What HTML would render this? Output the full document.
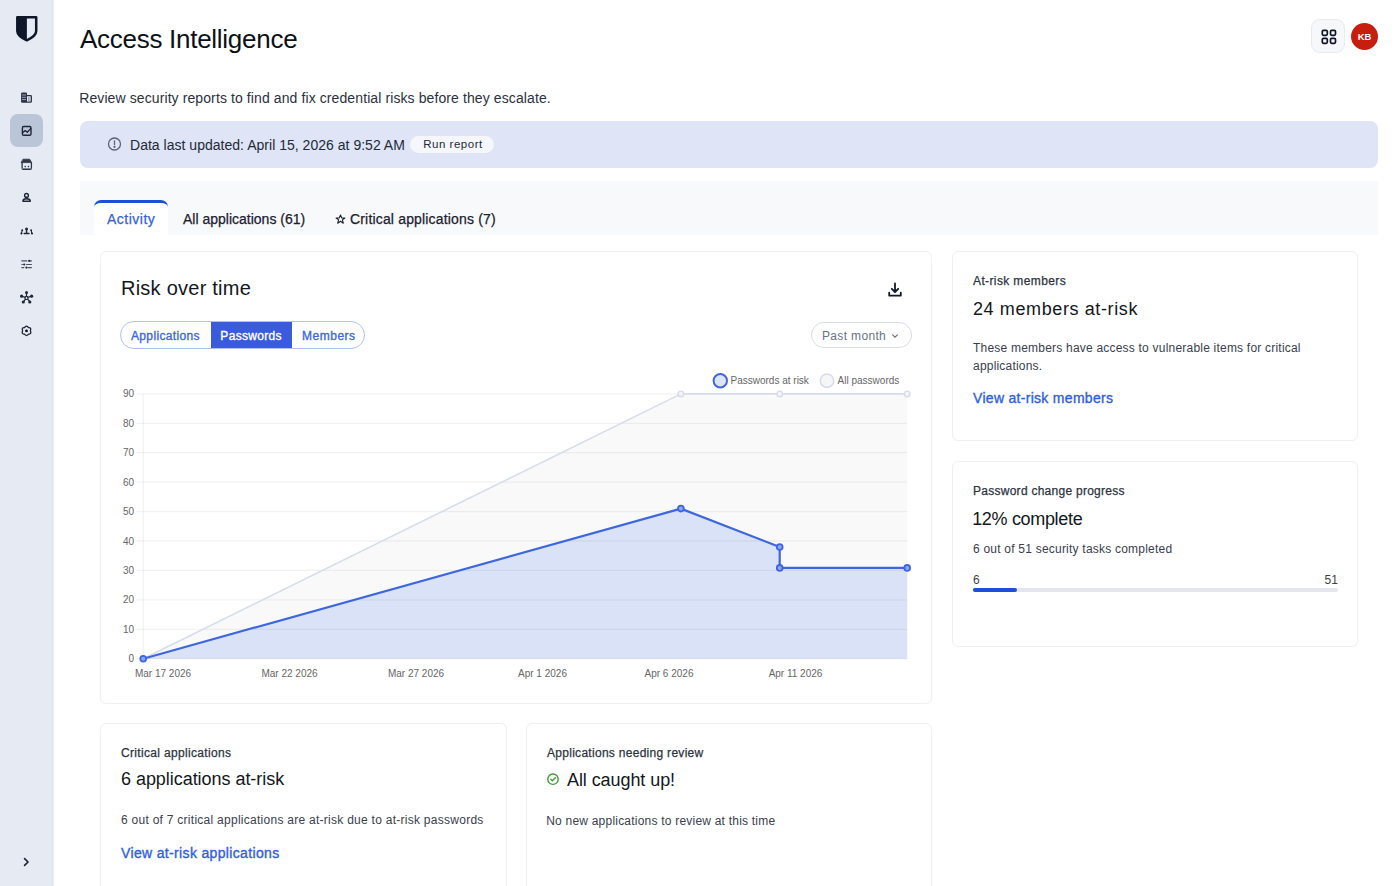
<!DOCTYPE html>
<html><head><meta charset="utf-8">
<style>
*{box-sizing:border-box;margin:0;padding:0}
html,body{width:1400px;height:886px;overflow:hidden;background:#fff;font-family:"Liberation Sans",sans-serif;color:#1b2029}
.abs{position:absolute}
.t{position:absolute;white-space:nowrap;line-height:1}
#side{position:absolute;left:0;top:0;width:53px;height:886px;background:#e6ebf3;border-right:1px solid #e1e5ec;box-shadow:1px 0 1px rgba(225,229,240,0.6)}
.nav{position:absolute;left:10px;width:33px;height:33px;border-radius:8px}
.nav.on{background:#bac5d8}
#banner{position:absolute;left:80px;top:121px;width:1298px;height:46.7px;border-radius:8px;background:#dfe4f6}
#tabbar{position:absolute;left:80px;top:181px;width:1298px;height:54px;background:#f8f9fb}
.card{position:absolute;background:#fff;border:1px solid #eff0f4;border-radius:6px}
</style></head><body>
<div id="side">
  <svg class="abs" style="left:16px;top:16px" width="22" height="27" viewBox="0 0 22 27"><path d="M1.3 1.3H20.2V15C20.2 18.8 15.8 22 10.75 24.3C5.7 22 1.3 18.8 1.3 15Z" fill="none" stroke="#0e1729" stroke-width="2.5" stroke-linejoin="round"/><path d="M1 1H10.9V24.6C5.5 22 1 18.8 1 15Z" fill="#0e1729"/></svg>
  <div class="nav on" style="top:114px"></div>
  <svg class="abs" style="left:0;top:0" width="53" height="886" viewBox="0 0 53 886" fill="none" stroke="#1f2636" stroke-width="1.5" stroke-linecap="round" stroke-linejoin="round">
        <!-- building -->
    <rect x="21.1" y="92.5" width="5.9" height="10.2" rx="1.2" fill="#2a3142" stroke="none"/>
    <path d="M22.5 95H25.6M22.5 97.3H25.6M22.5 99.6H25.6" stroke="#aeb6c6" stroke-width="0.9"/>
    <path d="M26.8 95.6H30.6C31.1 95.6 31.3 95.9 31.3 96.3V101.4C31.3 101.9 31.1 102.1 30.6 102.1H26.8" stroke-width="1.3" stroke="#2a3142"/>
    <path d="M28.9 97.6V100.6" stroke="#6c7486" stroke-width="0.9"/>
    <!-- chart -->
    <rect x="22.4" y="126.5" width="8.6" height="8.8" rx="1.4" stroke-width="1.4"/>
    <path d="M22.8 132.6L25.2 130.6L27.3 132.2L30.6 128.6" stroke-width="1.3"/>
    <!-- vault/shop -->
    <path d="M23.3 159.2H29.7L31.6 162.6H21.4Z" fill="#2f3647" stroke="#2f3647" stroke-width="0.8"/>
    <path d="M22.1 162.5V168.3C22.1 168.9 22.5 169.3 23.1 169.3H30.4C31 169.3 31.4 168.9 31.4 168.3V162.5" stroke-width="1.3" stroke="#2f3647"/>
    <path d="M22.6 168.5H30.9" stroke="#7c8496" stroke-width="1"/>
    <circle cx="25.2" cy="166.6" r="0.8" fill="#2f3647" stroke="none"/>
    <circle cx="28.4" cy="166.6" r="0.8" fill="#2f3647" stroke="none"/>
    <!-- person -->
    <circle cx="26.5" cy="195.4" r="1.9" stroke-width="1.4"/>
    <path d="M26.5 197.5V198.6"  stroke-width="1.3"/>
    <path d="M22.9 201.3C22.9 199.7 24.4 198.7 26.5 198.7C28.6 198.7 30.3 199.7 30.3 201.3Z" stroke-width="1.4"/>
    <!-- group -->
    <circle cx="26.55" cy="229.1" r="1.5" fill="#1f2636" stroke="none"/>
    <circle cx="22.2" cy="230.3" r="1" fill="#1f2636" stroke="none"/>
    <circle cx="31.1" cy="230.3" r="1" fill="#1f2636" stroke="none"/>
    <path d="M26.55 230.8V232.4M24.2 233.4H29" stroke-width="1.5"/>
    <path d="M22 231.2L21.5 233.3M31.3 231.2L31.9 233.3" stroke-width="1.1"/>
    <circle cx="21.4" cy="233.6" r="1" fill="#0f1422" stroke="none"/>
    <circle cx="32" cy="233.6" r="1" fill="#0f1422" stroke="none"/>
    <!-- sliders -->
    <path d="M21.8 260.9H26.8M30.4 260.9H31.4M21.8 264.5H22.4M26.6 264.5H31.4M21.8 267.6H23.8M28 267.6H31.4" stroke-width="1.2" stroke="#4a5163"/>
    <circle cx="29.2" cy="260.9" r="1.1" fill="#1f2636" stroke="none"/>
    <circle cx="24.2" cy="264.5" r="1.1" fill="#1f2636" stroke="none"/>
    <circle cx="26.4" cy="267.6" r="1.1" fill="#1f2636" stroke="none"/>
    <!-- network -->
    <path d="M26.5 293.6V296.2M22.8 296.6L24.9 297.3M30.2 296.6L28.1 297.3M23.8 301.3L25.3 299.4M29.7 301.3L27.7 299.4" stroke-width="1.2"/>
    <circle cx="26.5" cy="297.9" r="1.6" stroke-width="1.2"/>
    <circle cx="26.5" cy="292.4" r="1.5" fill="#1f2636" stroke="none"/>
    <circle cx="21.6" cy="296.2" r="1.6" fill="#1f2636" stroke="none"/>
    <circle cx="31.6" cy="296.2" r="1.6" fill="#1f2636" stroke="none"/>
    <circle cx="23.3" cy="302" r="1.6" fill="#1f2636" stroke="none"/>
    <circle cx="29.8" cy="302" r="1.6" fill="#1f2636" stroke="none"/>
    <!-- gear -->
    <path d="M26.5 326.2C27.4 326.2 27.8 327 28.4 327.5C29.2 327.6 30.1 327.4 30.6 328.3C31 329.1 30.5 329.8 30.4 330.8C30.6 331.7 31.2 332.4 30.7 333.3C30.2 334.2 29.3 334 28.5 334.2C27.9 334.7 27.5 335.6 26.5 335.6C25.5 335.6 25.1 334.7 24.5 334.2C23.7 334 22.8 334.2 22.3 333.3C21.8 332.4 22.4 331.7 22.6 330.8C22.5 329.8 22 329.1 22.4 328.3C22.9 327.4 23.8 327.6 24.6 327.5C25.2 327 25.6 326.2 26.5 326.2Z" stroke-width="1.3"/>
    <circle cx="26.5" cy="330.9" r="1.4" fill="#0a0f1a" stroke="none"/>
    <!-- chevron -->
    <path d="M24.6 858.6L28 862L24.6 865.4" stroke-width="1.7"/>

  </svg>
</div>
<div id="banner"></div>
<div id="tabbar"></div>
<div class="abs" style="left:94px;top:200px;width:74px;height:35px;background:#fff;border-top:3.5px solid #1f4fd8;border-radius:7px 7px 0 0"></div>
<div class="card" style="left:100px;top:251px;width:832px;height:452.5px"></div>
<div class="card" style="left:952px;top:251px;width:406px;height:190px"></div>
<div class="card" style="left:952px;top:461px;width:406px;height:186px"></div>
<div class="card" style="left:100px;top:723px;width:406.5px;height:200px"></div>
<div class="card" style="left:525.5px;top:723px;width:406.5px;height:200px"></div>

<!-- top right -->
<div class="abs" style="left:1311px;top:19px;width:34px;height:34px;border-radius:9px;background:#f6f8fb;border:1px solid #e7eaf0"></div>
<svg class="abs" style="left:1320.5px;top:28.5px" width="16" height="16" viewBox="0 0 16 16" fill="none" stroke="#0f1526" stroke-width="1.7"><rect x="1.3" y="1.3" width="5" height="5" rx="1.2"/><rect x="9.5" y="1.3" width="5" height="5" rx="1.2"/><rect x="1.3" y="9.3" width="5" height="5" rx="1.2"/><rect x="9.5" y="9.3" width="5" height="5" rx="1.2"/></svg>
<div class="abs" style="left:1351px;top:23px;width:27px;height:27px;border-radius:50%;background:#c81e10"></div>
<div class="t" style="left:1351px;top:32px;width:27px;text-align:center;font-size:9.5px;color:#fff;font-weight:bold">KB</div>

<!-- banner -->
<svg class="abs" style="left:107px;top:137px" width="15" height="15" viewBox="0 0 15 15" fill="none" stroke="#5b6477" stroke-width="1.3"><circle cx="7.5" cy="7" r="6"/><path d="M7.5 3.8V7.6" stroke-linecap="round"/><circle cx="7.5" cy="9.8" r="0.5" fill="#5b6477"/></svg>
<div class="abs" style="left:410px;top:136px;width:84px;height:17px;border-radius:9px;background:#f6f7fc"></div>

<!-- tabs star -->
<svg class="abs" style="left:335px;top:213.5px" width="11" height="11" viewBox="0 0 11 11"><path d="M5.5 1L6.8 4H9.9L7.4 5.9L8.3 9.2L5.5 7.3L2.7 9.2L3.6 5.9L1.1 4H4.2Z" fill="none" stroke="#1b2130" stroke-width="1.1" stroke-linejoin="round"/></svg>

<!-- risk card -->
<svg class="abs" style="left:887px;top:282px" width="16" height="16" viewBox="0 0 16 16" fill="none" stroke="#111827" stroke-width="1.8" stroke-linecap="round" stroke-linejoin="round"><path d="M8 1.5V9.8M4.8 6.8L8 10L11.2 6.8"/><path d="M2.2 10.6V13.6H13.8V10.6"/></svg>
<div class="abs" style="left:120px;top:321px;width:245px;height:28px;border-radius:14px;border:1.3px solid #b1c0f2;overflow:hidden">
  <div class="abs" style="left:90px;top:0;width:81px;height:28px;background:#3a5cdc"></div>
</div>
<div class="abs" style="left:811px;top:322px;width:101px;height:26px;border-radius:13px;border:1.3px solid #d9dde6;background:#fff"></div>
<svg class="abs" style="left:890px;top:332px" width="10" height="8" viewBox="0 0 10 8" fill="none" stroke="#6a7385" stroke-width="1.2" stroke-linecap="round"><path d="M2.6 2.8L5 5.2L7.4 2.8"/></svg>
<svg class="abs" style="left:0;top:0" width="1400" height="886" viewBox="0 0 1400 886">
<path d="M143.2 658.7 L680.9 393.9 L779.7 393.9 L907.2 393.9 L907.2 658.7 Z" fill="#f9f9fa"/>
<path d="M143.2 658.7 L680.9 508.6 L779.7 547.0 L779.7 567.9 L907.2 567.9 L907.2 658.7 Z" fill="#dae2f7"/>
<line x1="136.5" y1="658.7" x2="907.2" y2="658.7" stroke="rgba(0,0,0,0.05)" stroke-width="1.3"/>
<line x1="136.5" y1="629.3" x2="907.2" y2="629.3" stroke="rgba(0,0,0,0.05)" stroke-width="1.3"/>
<line x1="136.5" y1="599.9" x2="907.2" y2="599.9" stroke="rgba(0,0,0,0.05)" stroke-width="1.3"/>
<line x1="136.5" y1="570.4" x2="907.2" y2="570.4" stroke="rgba(0,0,0,0.05)" stroke-width="1.3"/>
<line x1="136.5" y1="541.0" x2="907.2" y2="541.0" stroke="rgba(0,0,0,0.05)" stroke-width="1.3"/>
<line x1="136.5" y1="511.6" x2="907.2" y2="511.6" stroke="rgba(0,0,0,0.05)" stroke-width="1.3"/>
<line x1="136.5" y1="482.2" x2="907.2" y2="482.2" stroke="rgba(0,0,0,0.05)" stroke-width="1.3"/>
<line x1="136.5" y1="452.7" x2="907.2" y2="452.7" stroke="rgba(0,0,0,0.05)" stroke-width="1.3"/>
<line x1="136.5" y1="423.3" x2="907.2" y2="423.3" stroke="rgba(0,0,0,0.05)" stroke-width="1.3"/>
<line x1="136.5" y1="393.9" x2="907.2" y2="393.9" stroke="rgba(0,0,0,0.05)" stroke-width="1.3"/>
<line x1="143.2" y1="393.9" x2="143.2" y2="664.7" stroke="rgba(0,0,0,0.05)" stroke-width="1.3"/>
<path d="M143.2 658.7 L680.9 393.9 L779.7 393.9 L907.2 393.9" fill="none" stroke="#d6ddeb" stroke-width="1.6" stroke-linejoin="round"/>
<circle cx="680.9" cy="393.9" r="2.8" fill="#f3f5f9" stroke="#d6ddeb" stroke-width="1.4"/>
<circle cx="779.7" cy="393.9" r="2.8" fill="#f3f5f9" stroke="#d6ddeb" stroke-width="1.4"/>
<circle cx="907.2" cy="393.9" r="2.8" fill="#f3f5f9" stroke="#d6ddeb" stroke-width="1.4"/>
<path d="M143.2 658.7 L680.9 508.6 L779.7 547.0 L779.7 567.9 L907.2 567.9" fill="none" stroke="#3e66de" stroke-width="2.2" stroke-linejoin="round"/>
<circle cx="143.2" cy="658.7" r="2.9" fill="#8fa6ea" stroke="#3e66de" stroke-width="1.8"/>
<circle cx="680.9" cy="508.6" r="2.9" fill="#8fa6ea" stroke="#3e66de" stroke-width="1.8"/>
<circle cx="779.7" cy="547.0" r="2.9" fill="#8fa6ea" stroke="#3e66de" stroke-width="1.8"/>
<circle cx="779.7" cy="567.9" r="2.9" fill="#8fa6ea" stroke="#3e66de" stroke-width="1.8"/>
<circle cx="907.2" cy="567.9" r="2.9" fill="#8fa6ea" stroke="#3e66de" stroke-width="1.8"/>
<text x="134" y="662.2" text-anchor="end" font-size="10" fill="#666" font-family="Liberation Sans">0</text>
<text x="134" y="632.8" text-anchor="end" font-size="10" fill="#666" font-family="Liberation Sans">10</text>
<text x="134" y="603.4" text-anchor="end" font-size="10" fill="#666" font-family="Liberation Sans">20</text>
<text x="134" y="573.9" text-anchor="end" font-size="10" fill="#666" font-family="Liberation Sans">30</text>
<text x="134" y="544.5" text-anchor="end" font-size="10" fill="#666" font-family="Liberation Sans">40</text>
<text x="134" y="515.1" text-anchor="end" font-size="10" fill="#666" font-family="Liberation Sans">50</text>
<text x="134" y="485.7" text-anchor="end" font-size="10" fill="#666" font-family="Liberation Sans">60</text>
<text x="134" y="456.2" text-anchor="end" font-size="10" fill="#666" font-family="Liberation Sans">70</text>
<text x="134" y="426.8" text-anchor="end" font-size="10" fill="#666" font-family="Liberation Sans">80</text>
<text x="134" y="397.4" text-anchor="end" font-size="10" fill="#666" font-family="Liberation Sans">90</text>
<text x="163" y="677" text-anchor="middle" font-size="10" fill="#666" font-family="Liberation Sans">Mar 17 2026</text>
<text x="289.5" y="677" text-anchor="middle" font-size="10" fill="#666" font-family="Liberation Sans">Mar 22 2026</text>
<text x="416" y="677" text-anchor="middle" font-size="10" fill="#666" font-family="Liberation Sans">Mar 27 2026</text>
<text x="542.5" y="677" text-anchor="middle" font-size="10" fill="#666" font-family="Liberation Sans">Apr 1 2026</text>
<text x="669" y="677" text-anchor="middle" font-size="10" fill="#666" font-family="Liberation Sans">Apr 6 2026</text>
<text x="795.5" y="677" text-anchor="middle" font-size="10" fill="#666" font-family="Liberation Sans">Apr 11 2026</text>
<circle cx="720.3" cy="380.7" r="6.7" fill="#dde4f7" stroke="#3e66de" stroke-width="2"/>
<circle cx="827" cy="380.7" r="6.7" fill="#f6f6f7" stroke="#d6ddeb" stroke-width="1.6"/>
</svg>

<!-- progress -->
<div class="abs" style="left:973px;top:588px;width:365px;height:3.5px;border-radius:2px;background:#e3e6ee"></div>
<div class="abs" style="left:973px;top:588px;width:44px;height:3.5px;border-radius:2px;background:#1f4fd8"></div>

<!-- check -->
<svg class="abs" style="left:546px;top:772px" width="14" height="14" viewBox="0 0 14 14" fill="none" stroke="#3f9a3a" stroke-width="1.4" stroke-linecap="round" stroke-linejoin="round"><circle cx="7" cy="7.2" r="5.2"/><path d="M4.8 7.3L6.4 8.8L9.3 5.8"/></svg>

<div class="t" id="t1" style="left:80px;top:25.92px;font-size:26px;color:#0d1117;letter-spacing:-0.275px;">Access Intelligence</div>
<div class="t" id="t2" style="left:79.2px;top:91px;font-size:14px;color:#2b3140;letter-spacing:0.100px;">Review security reports to find and fix credential risks before they escalate.</div>
<div class="t" id="t3" style="left:130px;top:138px;font-size:14px;color:#232a38;letter-spacing:0.021px;">Data last updated: April 15, 2026 at 9:52 AM</div>
<div class="t" id="t4" style="left:423.2px;top:139px;font-size:11.5px;color:#232a38;letter-spacing:0.520px;">Run report</div>
<div class="t" id="t5" style="left:107px;top:212px;font-size:14px;color:#3560dc;letter-spacing:0.501px;-webkit-text-stroke:0.25px currentColor;">Activity</div>
<div class="t" id="t6" style="left:183px;top:212px;font-size:14px;color:#1b2130;-webkit-text-stroke:0.25px currentColor;">All applications (61)</div>
<div class="t" id="t7" style="left:350px;top:212px;font-size:14px;color:#1b2130;letter-spacing:0.169px;-webkit-text-stroke:0.25px currentColor;">Critical applications (7)</div>
<div class="t" id="t8" style="left:121px;top:278px;font-size:20px;color:#121722;letter-spacing:0.242px;">Risk over time</div>
<div class="t" id="t9" style="left:131px;top:330px;font-size:12px;color:#4068de;letter-spacing:0.344px;-webkit-text-stroke:0.35px currentColor;">Applications</div>
<div class="t" id="t10" style="left:220.36px;top:330px;font-size:12px;color:#ffffff;letter-spacing:0.315px;-webkit-text-stroke:0.35px currentColor;">Passwords</div>
<div class="t" id="t11" style="left:302.04px;top:330px;font-size:12px;color:#4068de;letter-spacing:0.510px;-webkit-text-stroke:0.35px currentColor;">Members</div>
<div class="t" id="t12" style="left:822px;top:330px;font-size:12px;color:#6a7385;letter-spacing:0.340px;">Past month</div>
<div class="t" id="t13" style="left:730.5px;top:375.5px;font-size:10px;color:#666666;">Passwords at risk</div>
<div class="t" id="t14" style="left:837.6px;top:375.5px;font-size:10px;color:#666666;">All passwords</div>
<div class="t" id="t15" style="left:973px;top:275px;font-size:12px;color:#2c3342;letter-spacing:0.379px;-webkit-text-stroke:0.25px currentColor;">At-risk members</div>
<div class="t" id="t16" style="left:973px;top:300px;font-size:18px;color:#121722;letter-spacing:0.609px;">24 members at-risk</div>
<div class="t" id="t17" style="left:973px;top:342px;font-size:12px;color:#3a4050;letter-spacing:0.212px;">These members have access to vulnerable items for critical</div>
<div class="t" id="t17b" style="left:973px;top:360px;font-size:12px;color:#3a4050;letter-spacing:0.202px;">applications.</div>
<div class="t" id="t18" style="left:973px;top:391px;font-size:14px;color:#2f5ee0;letter-spacing:0.298px;-webkit-text-stroke:0.35px currentColor;">View at-risk members</div>
<div class="t" id="t19" style="left:973px;top:485px;font-size:12px;color:#2c3342;letter-spacing:0.266px;-webkit-text-stroke:0.25px currentColor;">Password change progress</div>
<div class="t" id="t20" style="left:972.2px;top:510px;font-size:18px;color:#121722;letter-spacing:-0.327px;">12% complete</div>
<div class="t" id="t21" style="left:973px;top:543px;font-size:12px;color:#3a4050;letter-spacing:0.219px;">6 out of 51 security tasks completed</div>
<div class="t" id="t22" style="left:973px;top:574px;font-size:12px;color:#3a4050;letter-spacing:-0.900px;">6</div>
<div class="t" id="t22b" style="left:1324.6px;top:574px;font-size:12px;color:#3a4050;">51</div>
<div class="t" id="t23" style="left:121px;top:747px;font-size:12px;color:#2c3342;letter-spacing:0.333px;-webkit-text-stroke:0.25px currentColor;">Critical applications</div>
<div class="t" id="t24" style="left:121px;top:770px;font-size:18px;color:#121722;letter-spacing:-0.043px;">6 applications at-risk</div>
<div class="t" id="t25" style="left:121px;top:814px;font-size:12px;color:#3a4050;letter-spacing:0.268px;">6 out of 7 critical applications are at-risk due to at-risk passwords</div>
<div class="t" id="t26" style="left:121px;top:846px;font-size:14px;color:#2f5ee0;letter-spacing:0.344px;-webkit-text-stroke:0.35px currentColor;">View at-risk applications</div>
<div class="t" id="t27" style="left:547px;top:747px;font-size:12px;color:#2c3342;letter-spacing:0.287px;-webkit-text-stroke:0.25px currentColor;">Applications needing review</div>
<div class="t" id="t28" style="left:567px;top:770.8px;font-size:18px;color:#121722;letter-spacing:-0.076px;">All caught up!</div>
<div class="t" id="t29" style="left:546.2px;top:814.72px;font-size:12px;color:#3a4050;letter-spacing:0.215px;">No new applications to review at this time</div>
</body></html>
